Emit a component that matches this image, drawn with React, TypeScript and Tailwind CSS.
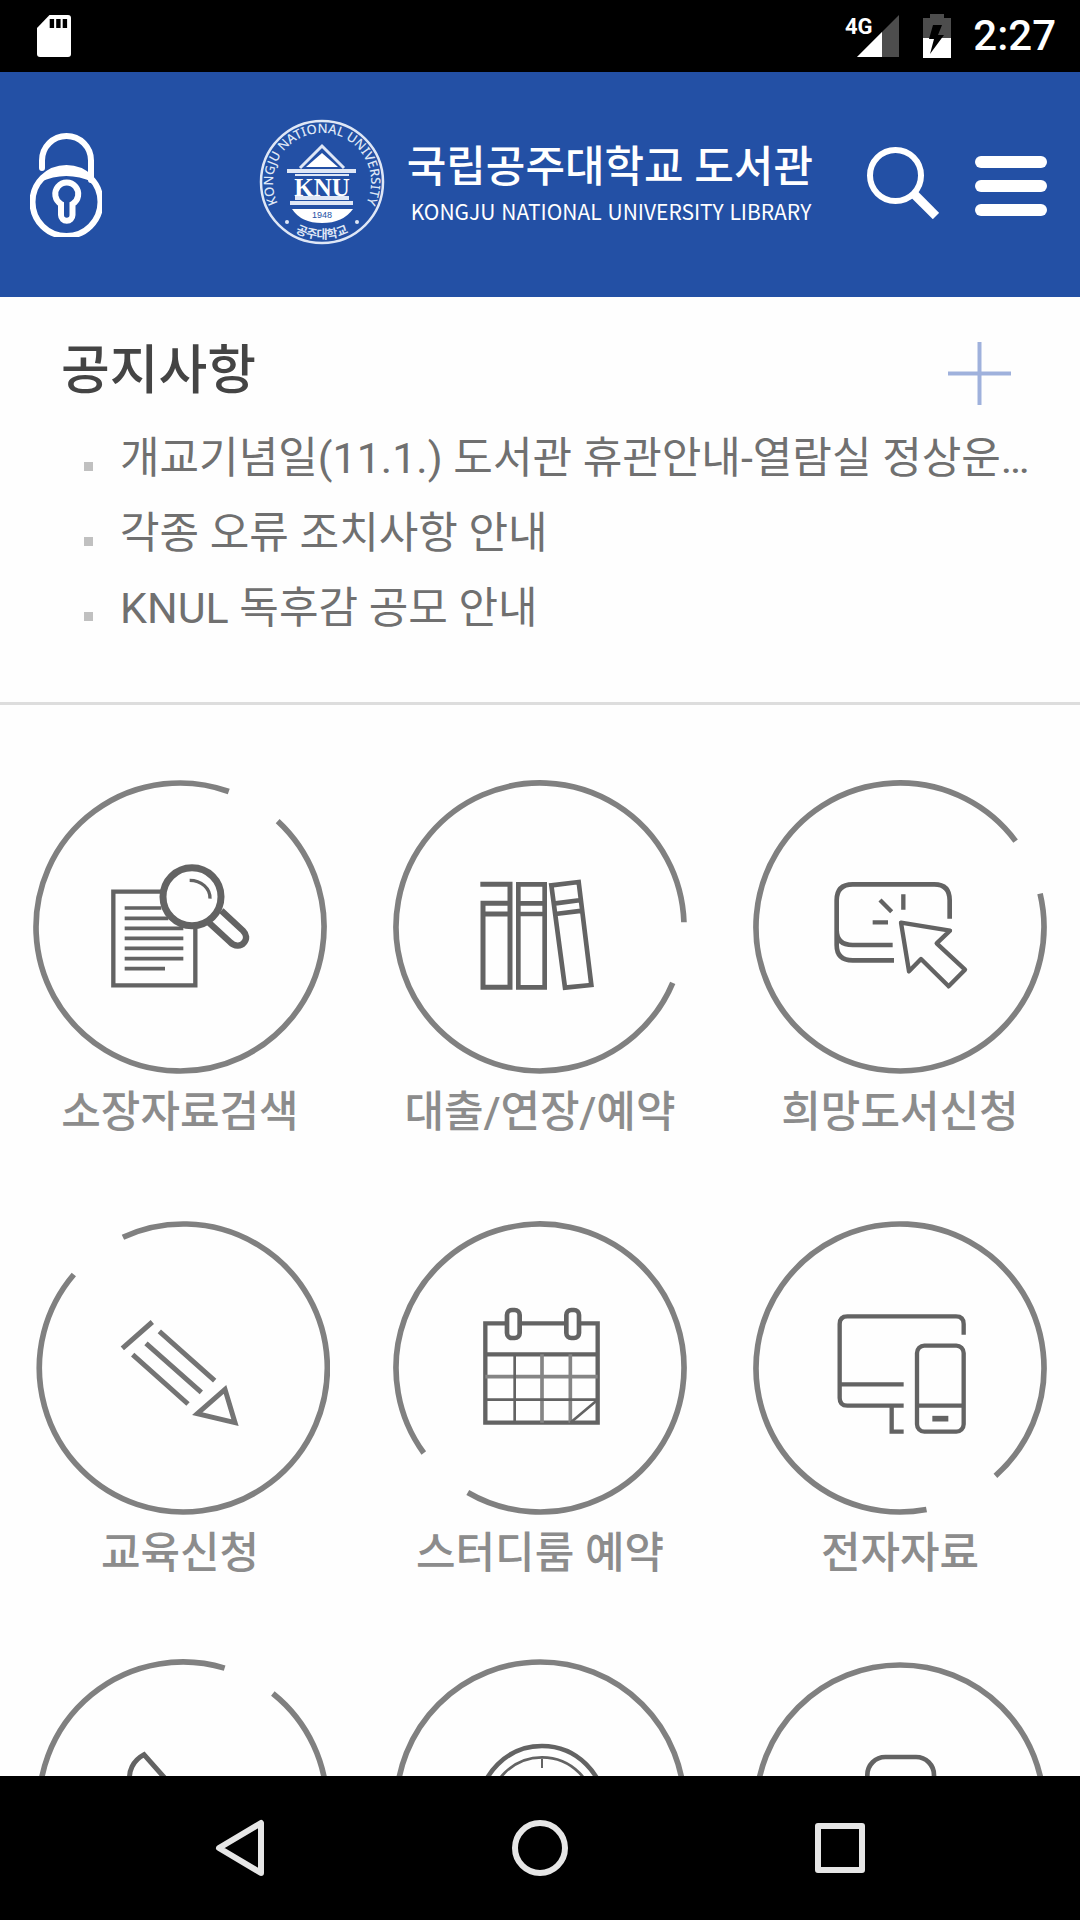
import type { ReactNode } from "react";

const INK = "#636363";

type RingProps = {
  cx?: number;
  cy?: number;
  gap?: [number, number];
};

const RADIUS = 432;

/** Thin circle that may be left open between two angles (degrees, clockwise). */
function Ring({ cx = 540, cy = 501, gap }: RingProps) {
  if (!gap) {
    return <circle cx={cx} cy={cy} r={RADIUS} stroke="#808080" strokeWidth={17} />;
  }
  const at = (deg: number) => {
    const a = (deg * Math.PI) / 180;
    return `${(cx + RADIUS * Math.cos(a)).toFixed(1)} ${(cy + RADIUS * Math.sin(a)).toFixed(1)}`;
  };
  return (
    <path
      d={`M${at(gap[1])}A${RADIUS} ${RADIUS} 0 1 1 ${at(gap[0])}`}
      stroke="#808080"
      strokeWidth={17}
    />
  );
}

function CatalogSearch() {
  return (
    <>
      <Ring gap={[-70.2, -47.3]} />
      <path d="M484 395H340V676H586V496" strokeWidth={13} />
      <path
        d="M374 444H484M374 475H505M374 505H550M374 535H550M374 565H550M374 596H550M374 626H495"
        strokeWidth={11}
      />
      <circle cx={576} cy={410} r={87} strokeWidth={21} />
      <path d="M569 361C604 361 631 385 630 416" strokeWidth={10} />
      <path
        d="M626 487L690 546C704 560 722 560 731 549C742 537 740 523 729 512L664 452"
        strokeWidth={19}
      />
    </>
  );
}

function Books() {
  return (
    <>
      <Ring gap={[-1.9, 22.8]} />
      <path d="M361 373H450V682H369V430H450M369 462H450" strokeWidth={15} />
      <path d="M475 373H554V682H475ZM475 430H554M475 462H554" strokeWidth={14} />
      <path d="M574 376L656 366L694 675L615 683ZM581 431L664 420M586 462L668 452" strokeWidth={14} />
    </>
  );
}

function RequestBook() {
  return (
    <>
      <Ring gap={[-36.6, -13.4]} />
      <path
        d="M689 476V421Q689 373 643 373H398Q350 373 350 421V555Q350 601 398 601H522M350 510Q350 555 398 555H518"
        strokeWidth={14}
      />
      <path d="M550 403V449M480 420L515 455M458 487H504" strokeWidth={13} />
      <path
        d="M543 488L690 512L650 550L735 629L686 679L603 597L567 634Z"
        strokeWidth={13}
        strokeLinejoin="round"
      />
    </>
  );
}

function Pencil() {
  return (
    <g stroke="#747474">
      <Ring cx={550} cy={504} gap={[-139.5, -114.8]} />
      <path
        d="M367 445L457 366M478 394L644 542M438 430L604 577M398 464L564 612M592 641L675 568L705 668Z"
        strokeWidth={15}
      />
    </g>
  );
}

function CalendarIcon() {
  return (
    <>
      <Ring cy={504} gap={[120.1, 143.8]} />
      <path d="M437 370H376V668H713V370H660M486 370H612M376 463H713" strokeWidth={13} />
      <path d="M376 530H713M546 463V668M631 463V668" stroke="#858585" strokeWidth={11} />
      <path d="M376 599H713M464 463V668M631 668L713 599" strokeWidth={8} />
      <rect x={441} y={330} width={38} height={84} rx={15} strokeWidth={14} />
      <rect x={619} y={330} width={38} height={84} rx={15} strokeWidth={14} />
    </>
  );
}

function Devices() {
  return (
    <>
      <Ring cy={504} gap={[48.5, 79.4]} />
      <path
        d="M731 404V372Q731 349 708 349H382Q359 349 359 372V594Q359 617 382 617H551M359 553H551M515 617V695H551"
        strokeWidth={13}
      />
      <rect x={591} y={437} width={140} height={258} rx={22} strokeWidth={13} />
      <path d="M591 617H731" strokeWidth={13} />
      <path d="M637 656H685" strokeWidth={17} />
    </>
  );
}

function Phone() {
  return (
    <>
      <Ring cx={549} cy={492} gap={[-73.2, -51.4]} />
      <path
        d="M432 338C400 355 382 388 391 424C410 510 520 620 610 640C645 645 670 628 682 600L590 530L555 560C520 540 490 510 475 475L512 428Z"
        strokeWidth={15}
      />
    </>
  );
}

function Clock() {
  return (
    <>
      <Ring cx={541} cy={492} />
      <circle cx={546} cy={500} r={188} strokeWidth={14} />
      <circle cx={546} cy={504} r={158} strokeWidth={8} />
      <path d="M546 350V378" strokeWidth={6} />
    </>
  );
}

function Mobile() {
  return (
    <>
      <Ring />
      <rect x={442} y={345} width={200} height={320} rx={54} strokeWidth={14} />
    </>
  );
}

type Service = { id: string; label?: string; top: number; icon: ReactNode };

const services: Service[] = [
  { id: "search", label: "소장자료검색", top: 45, icon: <CatalogSearch /> },
  { id: "loans", label: "대출/연장/예약", top: 45, icon: <Books /> },
  { id: "request", label: "희망도서신청", top: 45, icon: <RequestBook /> },
  { id: "education", label: "교육신청", top: 48, icon: <Pencil /> },
  { id: "study-room", label: "스터디룸 예약", top: 48, icon: <CalendarIcon /> },
  { id: "e-resources", label: "전자자료", top: 48, icon: <Devices /> },
  { id: "phone", top: 45, icon: <Phone /> },
  { id: "hours", top: 45, icon: <Clock /> },
  { id: "mobile", top: 45, icon: <Mobile /> },
];

const notices = [
  "개교기념일(11.1.) 도서관 휴관안내-열람실 정상운…",
  "각종 오류 조치사항 안내",
  "KNUL 독후감 공모 안내",
];

function StatusBar() {
  return (
    <div className="flex h-[72px] shrink-0 items-center bg-black pr-6 pl-[37px] text-white">
      <svg width="34" height="42" viewBox="0 0 34 42" aria-hidden="true">
        <path
          fill="currentColor"
          d="M12.5 0H31Q34 0 34 3V39Q34 42 31 42H3Q0 42 0 39V13Z"
        />
        <path d="M12.7 4h4.400v9h-4.400zM19.200 4h4.400v9h-4.400zM25.700 4h4.400v9h-4.400z" fill="#000" />
      </svg>
      <div className="ml-auto flex items-center">
        <svg
          className="overflow-visible"
          width="54"
          height="44"
          viewBox="0 0 54 44"
          aria-label="4G"
        >
          <path d="M54 1V43H12Z" fill="#4d4d4d" />
          <path d="M37 18V43H12Z" fill="currentColor" />
          <text x="0" y="20" fill="currentColor" className="text-[22px] font-bold">
            4G
          </text>
        </svg>
        <svg className="ml-6" width="28" height="44" viewBox="0 0 28 44" aria-label="배터리 충전 중">
          <path d="M7 0H21V4H28V24H0V4H7Z" fill="#4d4d4d" />
          <path d="M0 24H28V44H0Z" fill="currentColor" />
          <path d="M10 11H19L15 21H21L7 40L11 25H6Z" fill="#000" />
        </svg>
        <span className="ml-[22px] text-[42px] leading-[44px] font-medium">2:27</span>
      </div>
    </div>
  );
}

function Emblem() {
  return (
    <svg width="126" height="126" viewBox="0 0 126 126" fill="none" stroke="#dfe7f6" aria-hidden="true">
      <defs>
        <path id="seal-top" d="M23.9 92.5A49 49 0 1 1 102.1 92.5" />
        <path id="seal-bottom" d="M19.3 99.6A57 57 0 0 0 106.7 99.6" />
      </defs>
      <circle cx="63" cy="63" r="61" strokeWidth="2.500" />
      <g fill="#dfe7f6" stroke="none" className="font-['Noto_Sans','Noto_Sans_CJK_KR']">
        <text className="text-[13px] font-medium" textAnchor="middle">
          <textPath href="#seal-top" startOffset="50%">
            KONGJU NATIONAL UNIVERSITY
          </textPath>
        </text>
        <text className="text-[12px] font-bold" textAnchor="middle">
          <textPath href="#seal-bottom" startOffset="50%">
            공주대학교
          </textPath>
        </text>
        <circle cx="28" cy="103" r="2" />
        <circle cx="98" cy="103" r="2" />
        <path d="M63 34L79 48H47Z" fill="#fff" />
        <path d="M28 50H97V54H28ZM31 82H94V86H31ZM36 77H90V81H36ZM36 55H90V57H36Z" />
        <path d="M33 90H94Q84 104 63 104Q42 104 33 90Z" fill="#fff" />
      </g>
      <path d="M41 49L63 27L85 49" strokeWidth="3" />
      <text
        x="63"
        y="77"
        textAnchor="middle"
        fill="#fff"
        stroke="none"
        className="font-['Liberation_Serif'] text-[25px] font-bold"
      >
        KNU
      </text>
      <text
        x="63"
        y="99"
        textAnchor="middle"
        fill="#2350a5"
        stroke="none"
        className="font-['Liberation_Sans'] text-[9px]"
      >
        1948
      </text>
    </svg>
  );
}

function Header() {
  return (
    <header className="flex h-[225px] shrink-0 items-center bg-[#2350a5] pr-[33px] pl-[30px] text-white">
      <button type="button" aria-label="로그인">
        <svg width="72" height="104" viewBox="30 133 72 104" fill="none" stroke="currentColor" strokeWidth="6">
          <path d="M42 168V160.500A24.500 24.500 0 0 1 91 160.500V180" strokeLinecap="round" />
          <circle cx="66.500" cy="202" r="34" />
          <path d="M40 182Q66 150 93 182Q66 170 40 182Z" fill="currentColor" stroke="none" />
          <path d="M61 204V215A5.750 5.750 0 0 0 72.500 215V204A11.500 11.500 0 1 0 61 204Z" />
        </svg>
      </button>
      <a href="#home" className="mr-[54px] ml-auto flex items-center gap-[22px]">
        <span className="pb-1.5">
          <Emblem />
        </span>
        <span className="flex flex-col">
          <span className="text-[43px] leading-[52px] font-medium whitespace-nowrap">
            국립공주대학교 도서관
          </span>
          <span className="pl-1 font-['Noto_Sans_CJK_KR'] text-[21px] leading-9 whitespace-nowrap">
            KONGJU NATIONAL UNIVERSITY LIBRARY
          </span>
        </span>
      </a>
      <button type="button" aria-label="검색" className="mr-9 pb-1">
        <svg width="72" height="72" viewBox="867 147 72 72" fill="none" stroke="currentColor">
          <circle cx="895.500" cy="175.500" r="25.500" strokeWidth="6" />
          <path d="M913 193L936 216" strokeWidth="9" />
        </svg>
      </button>
      <button type="button" aria-label="메뉴" className="flex flex-col gap-3 pt-0.5">
        <span className="h-3 w-[72px] rounded-full bg-white" />
        <span className="h-3 w-[72px] rounded-full bg-white" />
        <span className="h-3 w-[72px] rounded-full bg-white" />
      </button>
    </header>
  );
}

function Notices() {
  return (
    <section className="border-b-[3px] border-[#dddddd] pt-9 pb-14">
      <div className="flex items-center justify-between pr-[69px] pl-[61px]">
        <h2 className="text-[53px] leading-[76px] font-medium text-[#444444]">공지사항</h2>
        <a href="#notices" aria-label="공지사항 더보기" className="pt-1">
          <svg width="63" height="63" viewBox="0 0 63 63" stroke="#9fb1dc" strokeWidth="4">
            <path d="M31.500 0V63M0 31.500H63" />
          </svg>
        </a>
      </div>
      <ul className="mt-3 pr-11 pl-[84px]">
        {notices.map((text) => (
          <li key={text} className="flex items-center gap-[27px]">
            <span className="mt-4 size-[9px] shrink-0 bg-[#c0c0c0]" />
            <a
              href="#notice"
              className="truncate text-[43px] leading-[75px] text-[#707070]"
            >
              {text}
            </a>
          </li>
        ))}
      </ul>
    </section>
  );
}

function NavigationBar() {
  return (
    <nav className="grid h-36 shrink-0 grid-cols-3 items-center justify-items-center bg-black px-[90px] text-[#e6e6e6]">
      <button type="button" aria-label="뒤로">
        <svg width="60" height="60" viewBox="0 0 60 60" fill="none" stroke="currentColor" strokeWidth="6" strokeLinejoin="round">
          <path d="M51 5V55L9 30Z" />
        </svg>
      </button>
      <button type="button" aria-label="홈">
        <svg width="60" height="60" viewBox="0 0 60 60" fill="none" stroke="currentColor" strokeWidth="6">
          <circle cx="30" cy="30" r="25" />
        </svg>
      </button>
      <button type="button" aria-label="최근 앱">
        <svg width="60" height="60" viewBox="0 0 60 60" fill="none" stroke="currentColor" strokeWidth="6" strokeLinejoin="round">
          <path d="M8 8H52V52H8Z" />
        </svg>
      </button>
    </nav>
  );
}

export default function App() {
  return (
    <div
      lang="ko"
      className="flex h-screen flex-col bg-[#fefefe] font-[Roboto,'Noto_Sans_CJK_KR',sans-serif]"
    >
      <StatusBar />
      <Header />
      <main className="min-h-0 flex-1 overflow-hidden">
        <Notices />
        <div className="grid grid-cols-3 gap-y-[72px] pt-[70px]">
          {services.map(({ id, label, top, icon }) => (
            <a key={id} href={`#${id}`} className="flex flex-col items-center gap-[5px]">
              <svg width="300" height="300" viewBox={`90 ${top} 900 900`} fill="none" stroke={INK} aria-hidden="true">
                {icon}
              </svg>
              {label && (
                <span className="text-[43px] leading-[64px] font-medium text-[#8c8c8c]">
                  {label}
                </span>
              )}
            </a>
          ))}
        </div>
      </main>
      <NavigationBar />
    </div>
  );
}
